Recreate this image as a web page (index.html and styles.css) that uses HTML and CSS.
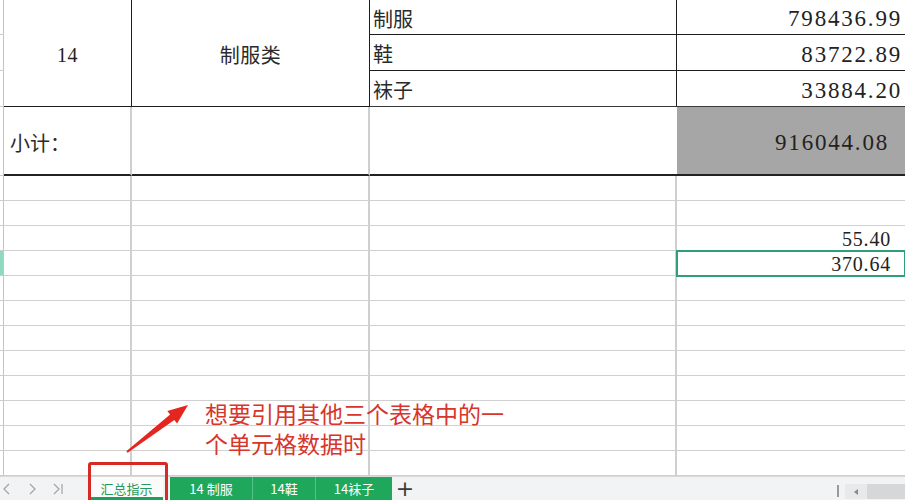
FILE: index.html
```html
<!DOCTYPE html>
<html lang="zh-CN">
<head>
    <meta charset="UTF-8">
    <meta name="viewport" content="width=device-width, initial-scale=1.0">
    <link rel="stylesheet" href="styles.css">
</head>
<body>

<div class="sheet">
    <table class="grid">
        <colgroup>
            <col class="c-rh">
            <col class="c-a">
            <col class="c-b">
            <col class="c-c">
            <col class="c-d">
        </colgroup>
        <tr class="r-top">
            <td class="rh"></td>
            <td class="cell blk-r blk-b center" rowspan="3">14</td>
            <td class="cell blk-r blk-b center cn" rowspan="3">制服类</td>
            <td class="cell blk-r blk-b cn item">制服</td>
            <td class="cell blk-b num big">798436.99</td>
        </tr>
        <tr class="r-mid">
            <td class="rh"></td>
            <td class="cell blk-r blk-b cn item">鞋</td>
            <td class="cell blk-b num big">83722.89</td>
        </tr>
        <tr class="r-mid">
            <td class="rh"></td>
            <td class="cell blk-r dark-b cn item">袜子</td>
            <td class="cell dark-b num big">33884.20</td>
        </tr>
        <tr class="r-sum">
            <td class="rh"></td>
            <td class="cell line-r sum-b cn label">小计：</td>
            <td class="cell line-r sum-b"></td>
            <td class="cell sum-b"></td>
            <td class="cell sum-b num big total">916044.08</td>
        </tr>
        <tr class="r"><td class="rh"></td><td class="cell line-r"></td><td class="cell line-r"></td><td class="cell line-r"></td><td class="cell"></td></tr>
        <tr class="r"><td class="rh"></td><td class="cell line-r"></td><td class="cell line-r"></td><td class="cell line-r"></td><td class="cell"></td></tr>
        <tr class="r"><td class="rh"></td><td class="cell line-r"></td><td class="cell line-r"></td><td class="cell line-r"></td><td class="cell num small">55.40</td></tr>
        <tr class="r"><td class="rh active"></td><td class="cell line-r"></td><td class="cell line-r"></td><td class="cell line-r"></td><td class="cell num small selected">370.64</td></tr>
        <tr class="r"><td class="rh"></td><td class="cell line-r"></td><td class="cell line-r"></td><td class="cell line-r"></td><td class="cell"></td></tr>
        <tr class="r"><td class="rh"></td><td class="cell line-r"></td><td class="cell line-r"></td><td class="cell line-r"></td><td class="cell"></td></tr>
        <tr class="r"><td class="rh"></td><td class="cell line-r"></td><td class="cell line-r"></td><td class="cell line-r"></td><td class="cell"></td></tr>
        <tr class="r"><td class="rh"></td><td class="cell line-r"></td><td class="cell line-r"></td><td class="cell line-r"></td><td class="cell"></td></tr>
        <tr class="r"><td class="rh"></td><td class="cell line-r"></td><td class="cell line-r"></td><td class="cell line-r"></td><td class="cell"></td></tr>
        <tr class="r"><td class="rh"></td><td class="cell line-r"></td><td class="cell line-r"></td><td class="cell line-r"></td><td class="cell"></td></tr>
        <tr class="r"><td class="rh"></td><td class="cell line-r"></td><td class="cell line-r"></td><td class="cell line-r"></td><td class="cell"></td></tr>
        <tr class="r"><td class="rh"></td><td class="cell line-r"></td><td class="cell line-r"></td><td class="cell line-r"></td><td class="cell"></td></tr>
    </table>

    <div class="tabbar">
        <div class="tab-nav">
            <svg width="10" height="12" viewBox="0 0 10 12"><path d="M7 1 L2 6 L7 11" fill="none" stroke="#a3a3a3" stroke-width="1.2"/></svg>
            <svg width="10" height="12" viewBox="0 0 10 12"><path d="M3 1 L8 6 L3 11" fill="none" stroke="#a3a3a3" stroke-width="1.2"/></svg>
            <svg width="12" height="12" viewBox="0 0 12 12"><path d="M2 1 L7 6 L2 11 M10 1 V11" fill="none" stroke="#a3a3a3" stroke-width="1.2"/></svg>
        </div>
        <div class="tab current">汇总指示</div>
        <div class="tab green w1">14 制服</div>
        <div class="tab green w2">14鞋</div>
        <div class="tab green w3">14袜子</div>
        <div class="tab-add">+</div>
        <div class="spacer"></div>
        <div class="hscroll">
            <span class="grip"></span>
            <span class="sbtn">
                <svg width="6" height="8" viewBox="0 0 6 8"><path d="M5 1 L1 4 L5 7 Z" fill="#8a8a8a"/></svg>
            </span>
            <span class="thumb"></span>
        </div>
    </div>

    <!-- пометка поверх таблицы -->
    <svg class="arrow" width="905" height="500" viewBox="0 0 905 500">
        <polygon points="126.3,451.2 170.1,414.4 167.3,410.9 188,405 177.1,423.5 174.3,420 127.7,452.8" fill="#e3271f"/>
    </svg>
    <div class="note">
        <div>想要引用其他三个表格中的一</div>
        <div>个单元格数据时</div>
    </div>
    <div class="mark"></div>
</div>

</body>
</html>
```

FILE: styles.css
```css
body {
    margin: 0;
    padding: 0;
    background: #ffffff;
    font-family: 'Liberation Serif', 'Noto Sans CJK SC', serif;
    color: #222222;
    overflow: hidden;
}

.sheet {
    position: relative;
    width: 905px;
    height: 500px;
    overflow: hidden;
}

.grid {
    width: 905px;
    table-layout: fixed;
    border-collapse: separate;
    border-spacing: 0;
}

.c-rh { width: 4px; }
.c-a { width: 128px; }
.c-b { width: 238px; }
.c-c { width: 307px; }
.c-d { width: 228px; }

.r-top { height: 35px; }
.r-mid { height: 36px; }
.r-sum { height: 69px; }
.r { height: 25px; }

.grid td {
    padding: 0;
    border-bottom: 1px solid #d0d0d0;
    white-space: nowrap;
    overflow: hidden;
}

.rh {
    border-right: 1px solid #c4c4c4;
    border-bottom-color: #cccccc !important;
}

.rh.active {
    background: #8fd9c0;
}

.cell {
    font-size: 20px;
    line-height: 22px;
}

.line-r { border-right: 2px solid #cfcfcf; }
.blk-r { border-right: 1px solid #1e1e1e; }
.grid .blk-b { border-bottom: 1px solid #1e1e1e; }
.grid .dark-b { border-bottom: 1px solid #3a3a3a; }
.grid .sum-b { border-bottom: 2px solid #222222; }

.center {
    text-align: center;
    padding-top: 4px !important;
    letter-spacing: 0.5px;
}

.cn {
    font-family: 'Noto Sans CJK SC', sans-serif;
    color: #2a2a2a;
}

.item {
    padding-left: 3px !important;
    padding-top: 3px !important;
}

.label {
    padding-left: 6px !important;
    padding-top: 4px !important;
}

.num {
    text-align: right;
}

.big {
    font-size: 23px;
    letter-spacing: 1.8px;
    padding-right: 3px !important;
    padding-top: 4px !important;
}

.total {
    background: #a6a6a6;
    padding-right: 16px !important;
}

.small {
    font-size: 20px;
    letter-spacing: 0.8px;
    padding-right: 14px !important;
    padding-top: 1px !important;
}

.selected {
    outline: 2px solid #2f9f79;
    outline-offset: -1px;
}

.tabbar {
    display: flex;
    align-items: stretch;
    height: 24px;
    background: #f2f3f5;
    border-top: 1px solid #d9d9d9;
    box-sizing: border-box;
    font-family: 'Noto Sans CJK SC', sans-serif;
    font-size: 13px;
    line-height: 16px;
}

.tab-nav {
    display: flex;
    align-items: center;
    gap: 15px;
    width: 82px;
    padding-left: 2px;
    box-sizing: border-box;
}

.tab {
    display: flex;
    align-items: center;
    justify-content: center;
}

.current {
    width: 88px;
    background: #fbfbfb;
    color: #23995a;
    box-shadow: inset 0 -3px 0 0 #1f9e58;
    border-left: 8px solid #f2f3f5;
    border-right: 7px solid #f2f3f5;
    box-sizing: border-box;
}

.green {
    background: #1fa85b;
    color: #ffffff;
    border-right: 1px solid #57c388;
    box-sizing: border-box;
}

.w1 { width: 83px; }
.w2 { width: 63px; }
.w3 { width: 76px; border-right: none; }

.tab-add {
    width: 26px;
    display: flex;
    align-items: center;
    justify-content: center;
    font-family: 'DejaVu Sans', sans-serif;
    font-size: 22px;
    color: #3b3b3b;
}

.spacer {
    flex: 1;
}

.hscroll {
    display: flex;
    align-items: flex-end;
    padding-bottom: 1px;
}

.grip {
    width: 2px;
    height: 12px;
    background: #9a9a9a;
    margin-right: 6px;
    margin-bottom: 2px;
}

.sbtn {
    width: 22px;
    height: 15px;
    background: #e8e9eb;
    display: flex;
    align-items: center;
    justify-content: center;
}

.thumb {
    width: 38px;
    height: 15px;
    background: #d6d7d9;
}

.arrow {
    position: absolute;
    left: 0;
    top: 0;
    pointer-events: none;
}

.note {
    position: absolute;
    left: 205px;
    top: 398px;
    font-family: 'Noto Sans CJK SC', sans-serif;
    font-size: 23px;
    line-height: 30px;
    color: #d8352c;
}

.mark {
    position: absolute;
    left: 88px;
    top: 462px;
    width: 74px;
    height: 50px;
    border: 3px solid #d62a24;
    border-radius: 3px;
}
```
